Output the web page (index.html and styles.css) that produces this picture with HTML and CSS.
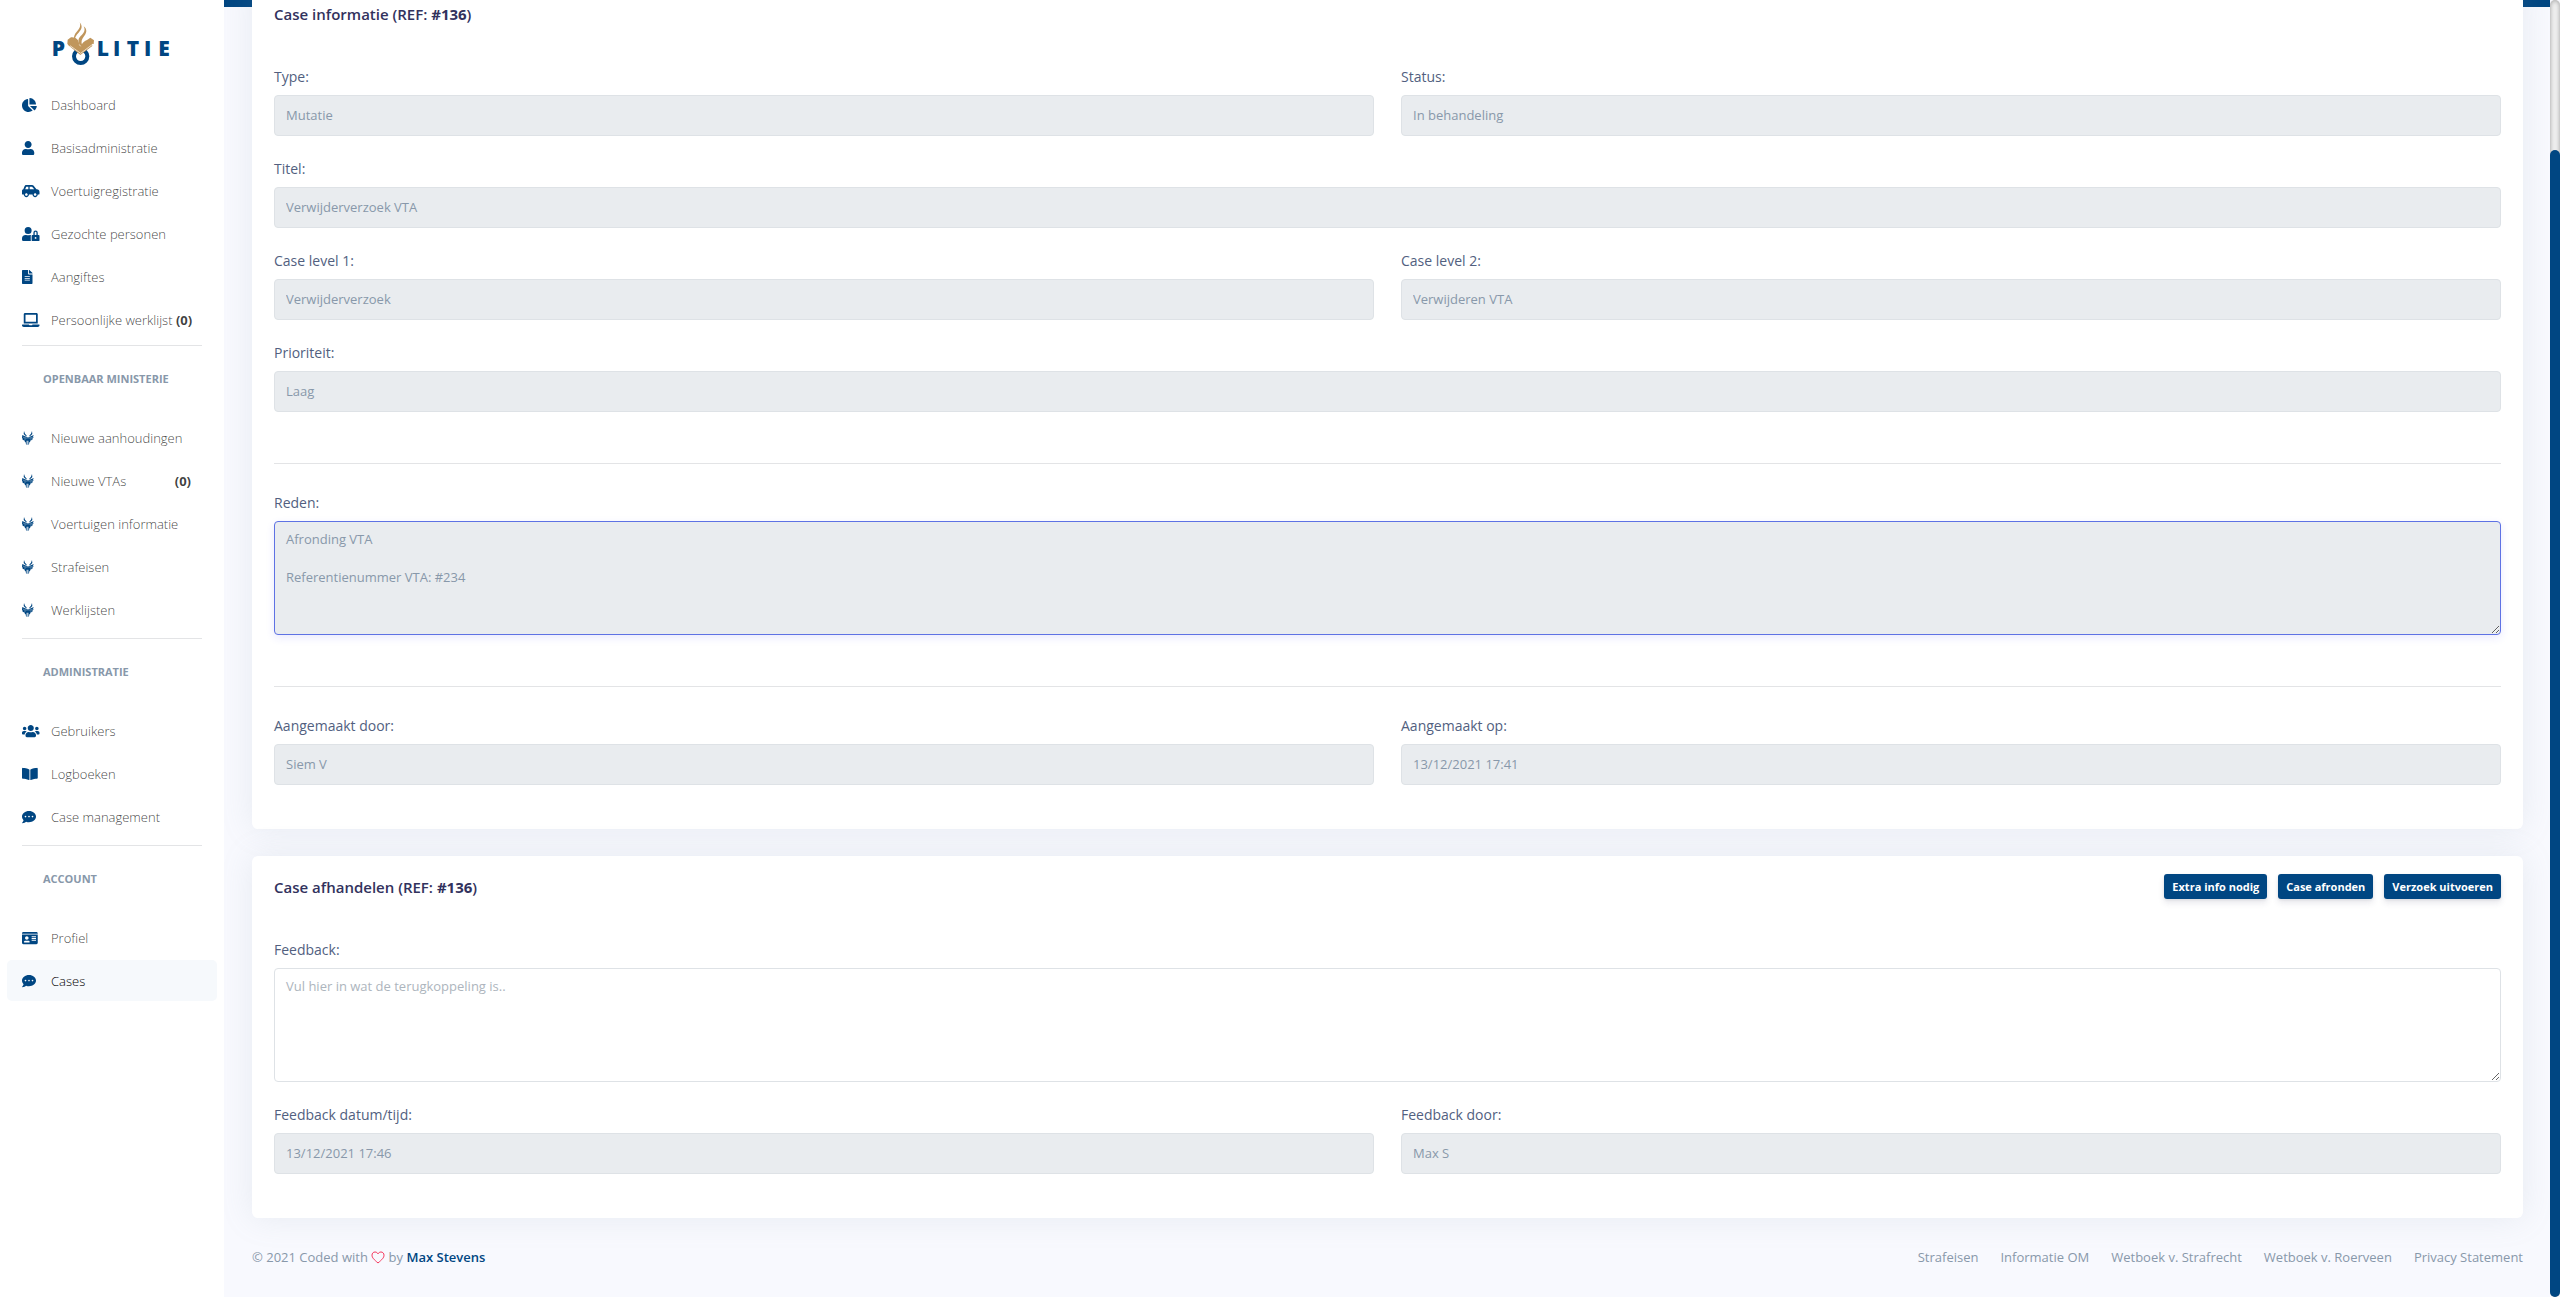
FILE: index.html
```html
<!DOCTYPE html>
<html lang="nl">
<head>
    <meta charset="UTF-8">
    <meta name="viewport" content="width=device-width, initial-scale=1.0">
    <title>Politie - Case #136</title>
    <link rel="stylesheet" href="styles.css">
</head>
<body>
    <!-- Iconen -->
    <svg class="sprite" aria-hidden="true">
        <symbol id="i-chart" viewBox="0 0 544 512" preserveAspectRatio="xMinYMid"><path d="M527.79 288H290.5l158.03 158.03c6.04 6.04 15.98 6.53 22.19.68 38.7-36.46 65.32-85.61 73.13-140.86 1.34-9.46-6.51-17.85-16.06-17.85zm-15.83-64.8C503.72 103.74 408.26 8.28 288.8.04 279.68-.59 272 7.1 272 16.24V240h223.77c9.14 0 16.82-7.68 16.19-16.8zM224 288V50.71c0-9.55-8.39-17.4-17.84-16.06C86.99 51.49-4.1 155.6.14 280.37 4.5 408.51 114.83 513.59 243.03 511.98c50.4-.63 96.97-16.87 135.26-44.03 7.9-5.6 8.42-17.23 1.57-24.08L224 288z"/></symbol>
        <symbol id="i-user" viewBox="0 0 448 512" preserveAspectRatio="xMinYMid"><path d="M224 256c70.7 0 128-57.3 128-128S294.7 0 224 0 96 57.3 96 128s57.3 128 128 128zm89.6 32h-16.7c-22.2 10.2-46.9 16-72.9 16s-50.6-5.8-72.9-16h-16.7C60.2 288 0 348.2 0 422.4V464c0 26.5 21.5 48 48 48h352c26.5 0 48-21.5 48-48v-41.6c0-74.2-60.2-134.4-134.4-134.4z"/></symbol>
        <symbol id="i-car" viewBox="0 0 640 512" preserveAspectRatio="xMinYMid"><path d="M544 192h-16L419.22 56.02A64.025 64.025 0 0 0 369.24 32H155.33c-26.17 0-49.7 15.93-59.42 40.23L48 194.26C20.44 201.4 0 226.21 0 256v112c0 8.84 7.16 16 16 16h48c0 53.02 42.98 96 96 96s96-42.98 96-96h128c0 53.02 42.98 96 96 96s96-42.98 96-96h48c8.84 0 16-7.16 16-16v-80c0-53.02-42.98-96-96-96zM160 432c-26.47 0-48-21.53-48-48s21.53-48 48-48 48 21.53 48 48-21.53 48-48 48zm72-240H116.93l38.4-96H232v96zm48 0V96h89.24l76.8 96H280zm200 240c-26.47 0-48-21.53-48-48s21.53-48 48-48 48 21.53 48 48-21.53 48-48 48z"/></symbol>
        <symbol id="i-lock" viewBox="0 0 640 512" preserveAspectRatio="xMinYMid"><path d="M224 256A128 128 0 1 0 96 128a128 128 0 0 0 128 128zm96 64a63.08 63.08 0 0 1 8.1-30.5c-4.8-.5-9.5-1.5-14.5-1.5h-16.7a174.08 174.08 0 0 1-145.8 0h-16.7A134.43 134.43 0 0 0 0 422.4V464a48 48 0 0 0 48 48h280.9a63.54 63.54 0 0 1-8.9-32zm288-32h-32v-80a80 80 0 0 0-160 0v80h-32a32 32 0 0 0-32 32v160a32 32 0 0 0 32 32h224a32 32 0 0 0 32-32V320a32 32 0 0 0-32-32zM496 432a32 32 0 1 1 32-32 32 32 0 0 1-32 32zm32-144h-64v-80a32 32 0 0 1 64 0z"/></symbol>
        <symbol id="i-file" viewBox="0 0 384 512" preserveAspectRatio="xMinYMid"><path d="M224 136V0H24C10.7 0 0 10.7 0 24v464c0 13.3 10.7 24 24 24h336c13.3 0 24-10.7 24-24V160H248c-13.2 0-24-10.8-24-24zm64 236c0 6.6-5.4 12-12 12H108c-6.6 0-12-5.4-12-12v-8c0-6.6 5.4-12 12-12h168c6.6 0 12 5.4 12 12v8zm0-64c0 6.6-5.4 12-12 12H108c-6.6 0-12-5.4-12-12v-8c0-6.6 5.4-12 12-12h168c6.6 0 12 5.4 12 12v8zm0-72v8c0 6.6-5.4 12-12 12H108c-6.6 0-12-5.4-12-12v-8c0-6.6 5.4-12 12-12h168c6.6 0 12 5.4 12 12zm96-114.1v6.1H256V0h6.1c6.4 0 12.5 2.5 17 7l97.9 98c4.5 4.5 7 10.6 7 16.9z"/></symbol>
        <symbol id="i-laptop" viewBox="0 0 640 512" preserveAspectRatio="xMinYMid"><path d="M624 416H381.54c-.74 19.81-14.71 32-32.74 32H288c-18.69 0-33.02-17.47-32.77-32H16c-8.8 0-16 7.2-16 16v16c0 35.2 28.8 64 64 64h512c35.2 0 64-28.8 64-64v-16c0-8.8-7.2-16-16-16zM576 48c0-26.4-21.6-48-48-48H112C85.6 0 64 21.6 64 48v336h512V48zm-64 272H128V64h384v256z"/></symbol>
        <symbol id="i-wolf" viewBox="0 0 36 42" preserveAspectRatio="xMinYMid">
            <path d="M6 0l3 8 6 7-5-1-5-5zM30 0l-3 8-6 7 5-1 5-5z"/>
            <path d="M1 12l8 4 7 2 2 4 2-4 7-2 8-4-2 6 2 1-4 4v4l-5 1-2 5-2 1-1 6-2 2V29h-2v13h-1V29h-2v13l-2-2-1-6-2-1-2-5-5-1v-4l-4-4 2-1z"/>
            <path class="wolf-line" d="M2 18l9 3M34 18l-9 3M6 24l6 0M30 24l-6 0M11 18l5 6M25 18l-5 6"/>
        </symbol>
        <symbol id="i-users" viewBox="0 0 640 512" preserveAspectRatio="xMinYMid"><path d="M96 224c35.3 0 64-28.7 64-64s-28.7-64-64-64-64 28.7-64 64 28.7 64 64 64zm448 0c35.3 0 64-28.7 64-64s-28.7-64-64-64-64 28.7-64 64 28.7 64 64 64zm32 32h-64c-17.6 0-33.5 7.1-45.1 18.6 40.3 22.1 68.9 62 75.1 109.4h66c17.7 0 32-14.3 32-32v-32c0-35.3-28.7-64-64-64zm-256 0c61.9 0 112-50.1 112-112S381.9 32 320 32 208 82.1 208 144s50.1 112 112 112zm76.8 32h-8.3c-20.8 10-43.9 16-68.5 16s-47.6-6-68.5-16h-8.3C179.6 288 128 339.6 128 403.2V432c0 26.5 21.5 48 48 48h288c26.5 0 48-21.5 48-48v-28.8c0-63.6-51.6-115.2-115.2-115.2zm-223.7-13.4C161.5 263.1 145.6 256 128 256H64c-35.3 0-64 28.7-64 64v32c0 17.7 14.3 32 32 32h65.9c6.3-47.4 34.9-87.3 75.2-109.4z"/></symbol>
        <symbol id="i-book" viewBox="0 0 576 512" preserveAspectRatio="xMinYMid"><path d="M542.22 32.05c-54.8 3.11-163.72 14.43-230.96 55.59-4.64 2.84-7.27 7.89-7.27 13.17v363.87c0 11.55 12.63 18.85 23.28 13.49 69.18-34.82 169.23-44.32 218.7-46.92 16.89-.89 30.02-14.43 30.02-30.66V62.75c.01-17.71-15.35-31.74-33.77-30.7zM264.73 87.64C197.5 46.48 88.58 35.17 33.78 32.05 15.36 31.01 0 45.04 0 62.75V400.6c0 16.24 13.13 29.78 30.02 30.66 49.49 2.6 149.59 12.11 218.77 46.95 10.62 5.35 23.21-1.94 23.21-13.46V100.63c0-5.29-2.62-10.14-7.27-12.99z"/></symbol>
        <symbol id="i-comment" viewBox="0 0 512 512" preserveAspectRatio="xMinYMid"><path d="M256 32C114.6 32 0 125.1 0 240c0 49.6 21.4 95 57 130.7C44.5 421.1 2.7 466 2.2 466.5c-2.2 2.3-2.8 5.7-1.5 8.7S4.8 480 8 480c66.3 0 116-31.8 140.6-51.4 32.7 12.3 69 19.4 107.4 19.4 141.4 0 256-93.1 256-208S397.4 32 256 32zM128 272c-17.7 0-32-14.3-32-32s14.3-32 32-32 32 14.3 32 32-14.3 32-32 32zm128 0c-17.7 0-32-14.3-32-32s14.3-32 32-32 32 14.3 32 32-14.3 32-32 32zm128 0c-17.7 0-32-14.3-32-32s14.3-32 32-32 32 14.3 32 32-14.3 32-32 32z"/></symbol>
        <symbol id="i-card" viewBox="0 0 576 512" preserveAspectRatio="xMinYMid"><path d="M528 32H48C21.5 32 0 53.5 0 80v16h576V80c0-26.5-21.5-48-48-48zM0 432c0 26.5 21.5 48 48 48h480c26.5 0 48-21.5 48-48V128H0v304zm352-232c0-4.4 3.6-8 8-8h144c4.4 0 8 3.6 8 8v16c0 4.4-3.6 8-8 8H360c-4.4 0-8-3.6-8-8v-16zm0 64c0-4.4 3.6-8 8-8h144c4.4 0 8 3.6 8 8v16c0 4.4-3.6 8-8 8H360c-4.4 0-8-3.6-8-8v-16zm0 64c0-4.4 3.6-8 8-8h144c4.4 0 8 3.6 8 8v16c0 4.4-3.6 8-8 8H360c-4.4 0-8-3.6-8-8v-16zM176 192c35.3 0 64 28.7 64 64s-28.7 64-64 64-64-28.7-64-64 28.7-64 64-64zM67.1 396.2C75.5 370.5 99.6 352 128 352h8.2c12.3 5.1 25.7 8 39.8 8s27.6-2.9 39.8-8h8.2c28.4 0 52.5 18.5 60.9 44.2 3.2 9.9-5.2 19.8-15.6 19.8H82.7c-10.4 0-18.8-10-15.6-19.8z"/></symbol>
    </svg>

    <nav class="sidebar">
        <a class="brand" href="#" aria-label="Politie">
            <svg class="logo" viewBox="31 35 366 135">
                <text y="137"><tspan x="36">P</tspan><tspan x="171">L</tspan><tspan x="220">I</tspan><tspan x="261">T</tspan><tspan x="313">I</tspan><tspan x="356">E</tspan></text>
                <circle class="ring" cx="123" cy="138" r="20"/>
                <path class="book" d="M84 88l10-7c9-1 17 3 21 9 2 6 4 9 5 14l7-3c3-5 8-9 15-12l10-7 11 8-1 11-5 1 1 5-36 27-36-29-3-5z"/>
                <path class="flame" d="M120 36c10 12 6 21-2 30-9 10-15 17-9 27l12 15c-3-11-8-18-1-27 8-9 20-18 12-33 13 10 8 22 0 31-6 8-8 14-5 25l-4 6-15-15c-10-13-3-24 5-33 7-8 11-15 7-26z"/>
                <path class="fold" d="M91 106l32 23 37-28M119 103l4 5"/>
            </svg>
        </a>

        <ul class="menu">
            <li><a href="#"><svg class="icon"><use href="#i-chart"/></svg>Dashboard</a></li>
            <li><a href="#"><svg class="icon"><use href="#i-user"/></svg>Basisadministratie</a></li>
            <li><a href="#"><svg class="icon"><use href="#i-car"/></svg>Voertuigregistratie</a></li>
            <li><a href="#"><svg class="icon"><use href="#i-lock"/></svg>Gezochte personen</a></li>
            <li><a href="#"><svg class="icon"><use href="#i-file"/></svg>Aangiftes</a></li>
            <li><a href="#"><svg class="icon"><use href="#i-laptop"/></svg>Persoonlijke werklijst&nbsp;<b>(0)</b></a></li>
        </ul>
        <hr>

        <h6>Openbaar Ministerie</h6>
        <ul class="menu">
            <li><a href="#"><svg class="icon"><use href="#i-wolf"/></svg>Nieuwe aanhoudingen</a></li>
            <li><a href="#"><svg class="icon"><use href="#i-wolf"/></svg>Nieuwe VTAs <b class="count">(0)</b></a></li>
            <li><a href="#"><svg class="icon"><use href="#i-wolf"/></svg>Voertuigen informatie</a></li>
            <li><a href="#"><svg class="icon"><use href="#i-wolf"/></svg>Strafeisen</a></li>
            <li><a href="#"><svg class="icon"><use href="#i-wolf"/></svg>Werklijsten</a></li>
        </ul>
        <hr>

        <h6>Administratie</h6>
        <ul class="menu">
            <li><a href="#"><svg class="icon"><use href="#i-users"/></svg>Gebruikers</a></li>
            <li><a href="#"><svg class="icon"><use href="#i-book"/></svg>Logboeken</a></li>
            <li><a href="#"><svg class="icon"><use href="#i-comment"/></svg>Case management</a></li>
        </ul>
        <hr>

        <h6>Account</h6>
        <ul class="menu">
            <li><a href="#"><svg class="icon"><use href="#i-card"/></svg>Profiel</a></li>
            <li><a class="active" href="#"><svg class="icon"><use href="#i-comment"/></svg>Cases</a></li>
        </ul>
    </nav>

    <main class="main-content">
        <section class="card card-info">
            <div class="card-header">
                <h3>Case informatie (REF: <b>#136</b>)</h3>
            </div>
            <div class="card-body">
                <div class="row">
                    <div class="form-group">
                        <label for="type">Type:</label>
                        <input type="text" id="type" value="Mutatie" readonly>
                    </div>
                    <div class="form-group">
                        <label for="status">Status:</label>
                        <input type="text" id="status" value="In behandeling" readonly>
                    </div>
                </div>
                <div class="form-group">
                    <label for="titel">Titel:</label>
                    <input type="text" id="titel" value="Verwijderverzoek VTA" readonly>
                </div>
                <div class="row">
                    <div class="form-group">
                        <label for="level1">Case level 1:</label>
                        <input type="text" id="level1" value="Verwijderverzoek" readonly>
                    </div>
                    <div class="form-group">
                        <label for="level2">Case level 2:</label>
                        <input type="text" id="level2" value="Verwijderen VTA" readonly>
                    </div>
                </div>
                <div class="form-group">
                    <label for="prioriteit">Prioriteit:</label>
                    <input type="text" id="prioriteit" value="Laag" readonly>
                </div>
                <hr>
                <div class="form-group">
                    <label for="reden">Reden:</label>
                    <textarea id="reden" class="focused" readonly>Afronding VTA

Referentienummer VTA: #234</textarea>
                </div>
                <hr>
                <div class="row">
                    <div class="form-group">
                        <label for="door">Aangemaakt door:</label>
                        <input type="text" id="door" value="Siem V" readonly>
                    </div>
                    <div class="form-group">
                        <label for="op">Aangemaakt op:</label>
                        <input type="text" id="op" value="13/12/2021 17:41" readonly>
                    </div>
                </div>
            </div>
        </section>

        <section class="card">
            <div class="card-header">
                <h3>Case afhandelen (REF: <b>#136</b>)</h3>
                <div class="actions">
                    <button type="button">Extra info nodig</button>
                    <button type="button">Case afronden</button>
                    <button type="button">Verzoek uitvoeren</button>
                </div>
            </div>
            <div class="card-body">
                <div class="form-group">
                    <label for="feedback">Feedback:</label>
                    <textarea id="feedback" placeholder="Vul hier in wat de terugkoppeling is.."></textarea>
                </div>
                <div class="row">
                    <div class="form-group">
                        <label for="datum">Feedback datum/tijd:</label>
                        <input type="text" id="datum" value="13/12/2021 17:46" readonly>
                    </div>
                    <div class="form-group">
                        <label for="feedbackdoor">Feedback door:</label>
                        <input type="text" id="feedbackdoor" value="Max S" readonly>
                    </div>
                </div>
            </div>
        </section>

        <footer>
            <div class="copyright">© 2021 Coded with
                <svg class="heart" viewBox="0 0 14 13"><path d="M7 12C3 8.5 1 6.8 1 4.2 1 2.3 2.3 1 4 1c1.3 0 2.4.7 3 1.8C7.600 1.7 8.7 1 10 1c1.7 0 3 1.3 3 3.2C13 6.800 11 8.5 7 12z"/></svg>
                by <a href="#">Max Stevens</a></div>
            <div class="footer-links">
                <a href="#">Strafeisen</a>
                <a href="#">Informatie OM</a>
                <a href="#">Wetboek v. Strafrecht</a>
                <a href="#">Wetboek v. Roerveen</a>
                <a href="#">Privacy Statement</a>
            </div>
        </footer>
    </main>

    <div class="scroll-track"><div class="scroll-thumb"></div></div>
</body>
</html>
```

FILE: styles.css
```css
* {
    box-sizing: border-box;
}

body {
    display: flex;
    min-height: 100vh;
    margin: 0;
    overflow-x: hidden;
    font-family: "Open Sans", sans-serif;
    font-size: 13px;
    color: #525f7f;
    background-color: #f8f9fe;
}

a {
    text-decoration: none;
}

hr {
    height: 1px;
    border: none;
    background-color: #e3e4e6;
}

.sprite {
    display: none;
}

/* Zijbalk */
.sidebar {
    position: relative;
    z-index: 1;
    flex: 0 0 224px;
    background-color: #fff;
}

.brand {
    display: block;
    height: 84px;
    padding: 22px 0 0 50px;
}

.logo {
    display: block;
    width: 122px;
    height: 45px;
    fill: #004682;
    font-size: 63px;
    font-weight: 800;
}

.logo .ring {
    fill: none;
    stroke: #004682;
    stroke-width: 12;
}

.logo .book,
.logo .flame {
    fill: #c0965c;
}

.logo .fold {
    fill: none;
    stroke: #fff;
    stroke-width: 2;
}

.menu {
    margin: 0;
    padding: 0 7px;
    list-style: none;
}

.menu a {
    display: flex;
    align-items: center;
    height: 41px;
    margin-bottom: 2px;
    padding: 0 15px;
    border-radius: 5px;
    color: rgba(0, 0, 0, 0.75);
    font-weight: 300;
}

.menu a.active {
    background-color: #f6f9fc;
    color: #000;
}

.menu b {
    font-weight: 700;
}

.menu .count {
    margin-left: auto;
    margin-right: 11px;
}

.icon {
    flex: none;
    width: 18px;
    height: 14px;
    margin-right: 11px;
    fill: #004682;
}

.wolf-line {
    fill: none;
    stroke: #fff;
    stroke-width: 1;
}

.sidebar hr {
    margin: 8px 22px 23px;
}

.menu:first-of-type + hr {
    margin-top: 5px;
}

.sidebar h6 {
    margin: 0 0 28px 43px;
    color: #8898aa;
    font-size: 11px;
    font-weight: 700;
    line-height: 20px;
    text-transform: uppercase;
}

/* Inhoud */
.main-content {
    flex: 1;
    min-width: 0;
    padding: 0 27px 0 28px;
    background: linear-gradient(#004682 7px, #f8f9fe 7px);
}

.card {
    margin-bottom: 27px;
    border-radius: 6px;
    background-color: #fff;
    box-shadow: 0 0 32px rgba(136, 152, 170, 0.15);
}

/* kaart staat iets omhoog gescrold */
.card-info {
    margin-top: -17px;
}

.card-header {
    display: flex;
    justify-content: space-between;
    align-items: center;
    height: 61px;
    padding: 0 22px;
}

.card-header h3 {
    margin: 0;
    color: #32325d;
    font-size: 15px;
    font-weight: 600;
}

.card-header b {
    font-weight: 700;
}

.card-body {
    display: flex;
    flex-direction: column;
    padding: 22px;
}

.card-body hr {
    width: 100%;
    margin: 29px 0 28px;
}

.row {
    display: grid;
    grid-template-columns: 1fr 1fr;
    column-gap: 27px;
}

.form-group {
    margin-bottom: 22px;
}

.form-group label {
    display: block;
    margin-bottom: 7px;
    font-size: 14px;
    line-height: 22px;
}

input,
textarea {
    display: block;
    width: 100%;
    padding: 8px 11px;
    border: 1px solid #dee2e6;
    border-radius: 4px;
    background-color: #fff;
    color: #8898aa;
    font-family: inherit;
    font-size: 13px;
    line-height: 19px;
    outline: none;
}

input {
    height: 41px;
    padding-bottom: 10px;
}

textarea {
    height: 114px;
    resize: vertical;
}

input:read-only,
textarea:read-only {
    background-color: #e9ecef;
}

::placeholder {
    color: #adb5bd;
}

textarea.focused {
    border-color: #5e72e4;
    box-shadow: 0 3px 9px rgba(50, 50, 250, 0.1);
}

.actions {
    display: flex;
    gap: 11px;
}

button {
    height: 25px;
    padding: 0 8px;
    border: none;
    border-radius: 3px;
    background-color: #004682;
    box-shadow: 0 4px 6px rgba(50, 50, 93, 0.11), 0 1px 3px rgba(0, 0, 0, 0.08);
    color: #fff;
    font-family: inherit;
    font-size: 11px;
    font-weight: 700;
    cursor: pointer;
}

footer {
    display: flex;
    justify-content: space-between;
    line-height: 24px;
    color: #8898aa;
}

.copyright a {
    color: #004682;
    font-weight: 600;
}

.heart {
    width: 14px;
    height: 13px;
    vertical-align: -2px;
    fill: none;
    stroke: #f5365c;
}

.footer-links {
    display: flex;
    gap: 22px;
}

.footer-links a {
    color: #8898aa;
}

/* Scrollbalk */
.scroll-track {
    display: flex;
    flex: 0 0 10px;
    border-radius: 10px;
    background-color: #f0f0f0;
    box-shadow: inset 0 0 5px #999;
}

.scroll-thumb {
    flex: 1;
    margin-top: 150px;
    border-radius: 10px;
    background-color: #004682;
}
```
